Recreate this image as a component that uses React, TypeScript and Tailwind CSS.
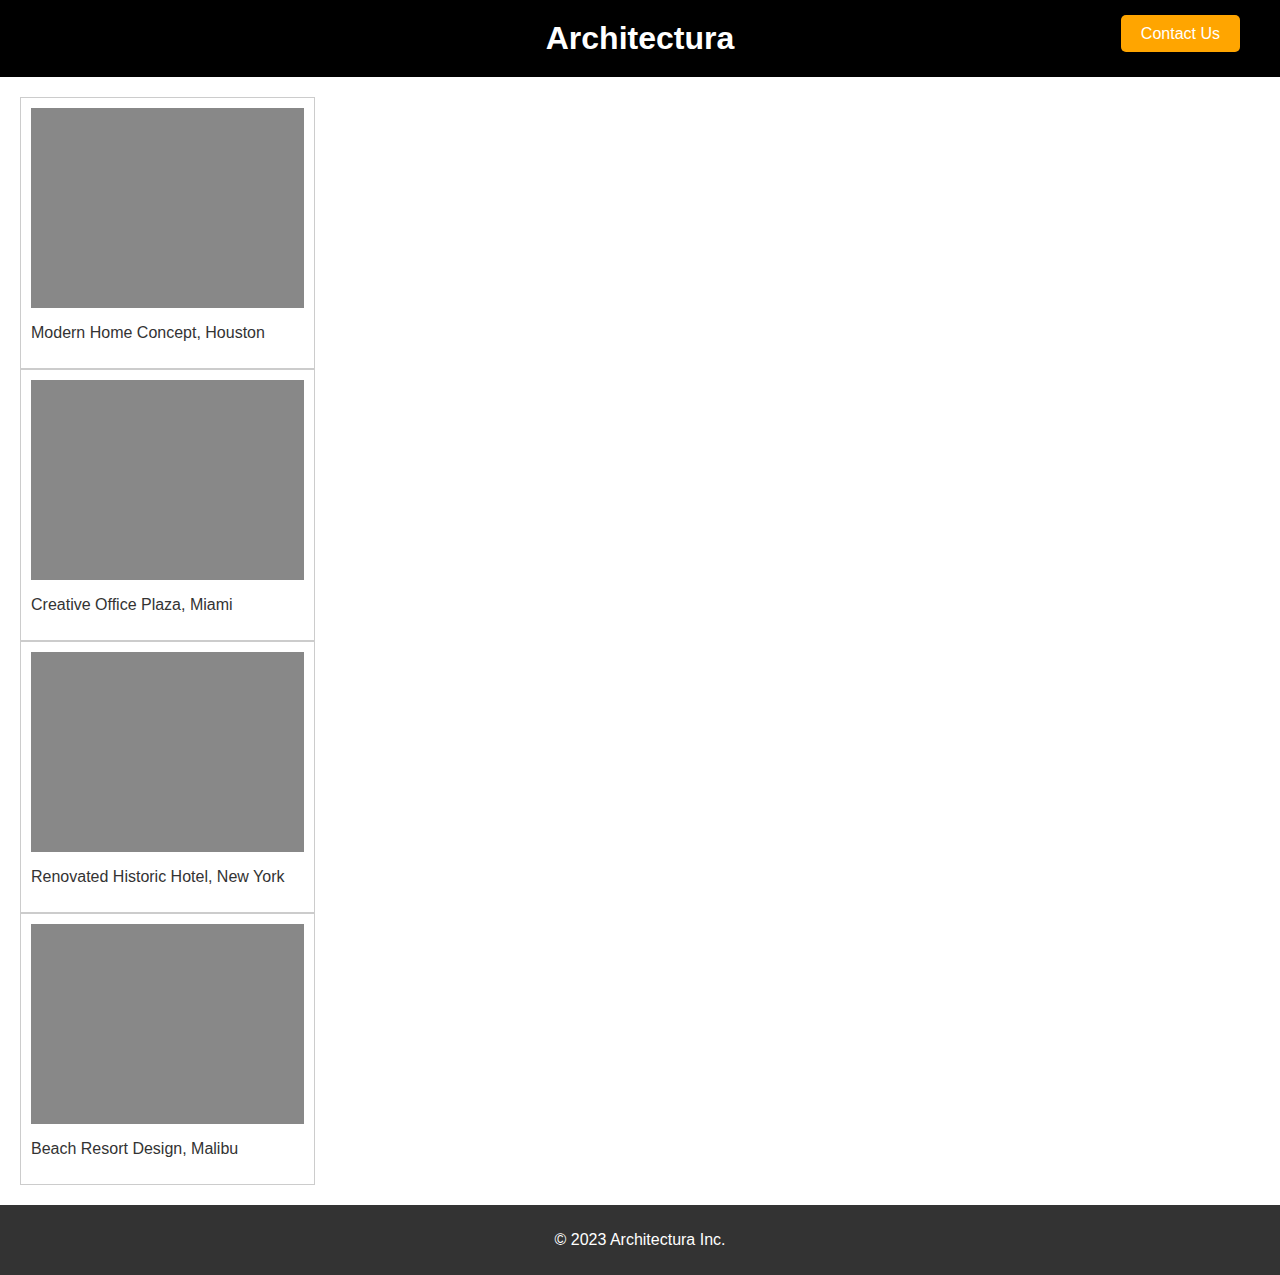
const projects = [
  "Modern Home Concept, Houston",
  "Creative Office Plaza, Miami",
  "Renovated Historic Hotel, New York",
  "Beach Resort Design, Malibu",
];

export default function App() {
  return (
    <div className="min-h-screen flex flex-col bg-white font-['Liberation_Sans',Arial,sans-serif] text-[#333]">
      {/* Header */}
      <header className="relative bg-black text-white py-5 text-center">
        <h1 className="text-[32px] leading-[37px] font-bold">Architectura</h1>
        <button className="absolute right-10 top-[15px] h-[37px] px-5 rounded-[5px] bg-[#ffa500] text-white text-base">
          Contact Us
        </button>
      </header>

      {/* Projects */}
      <main className="flex-1 p-5">
        <div className="flex flex-col">
          {projects.map((title) => (
            <div key={title} className="w-[295px] border border-[#ccc] p-[10px]">
              <div className="h-[200px] w-full bg-[#888]" />
              <p className="my-4 text-base leading-[18px]">{title}</p>
            </div>
          ))}
        </div>
      </main>

      {/* Footer */}
      <footer className="bg-[#333] text-white text-center h-[70px] flex items-center justify-center">
        <p className="text-base">© 2023 Architectura Inc.</p>
      </footer>
    </div>
  );
}
